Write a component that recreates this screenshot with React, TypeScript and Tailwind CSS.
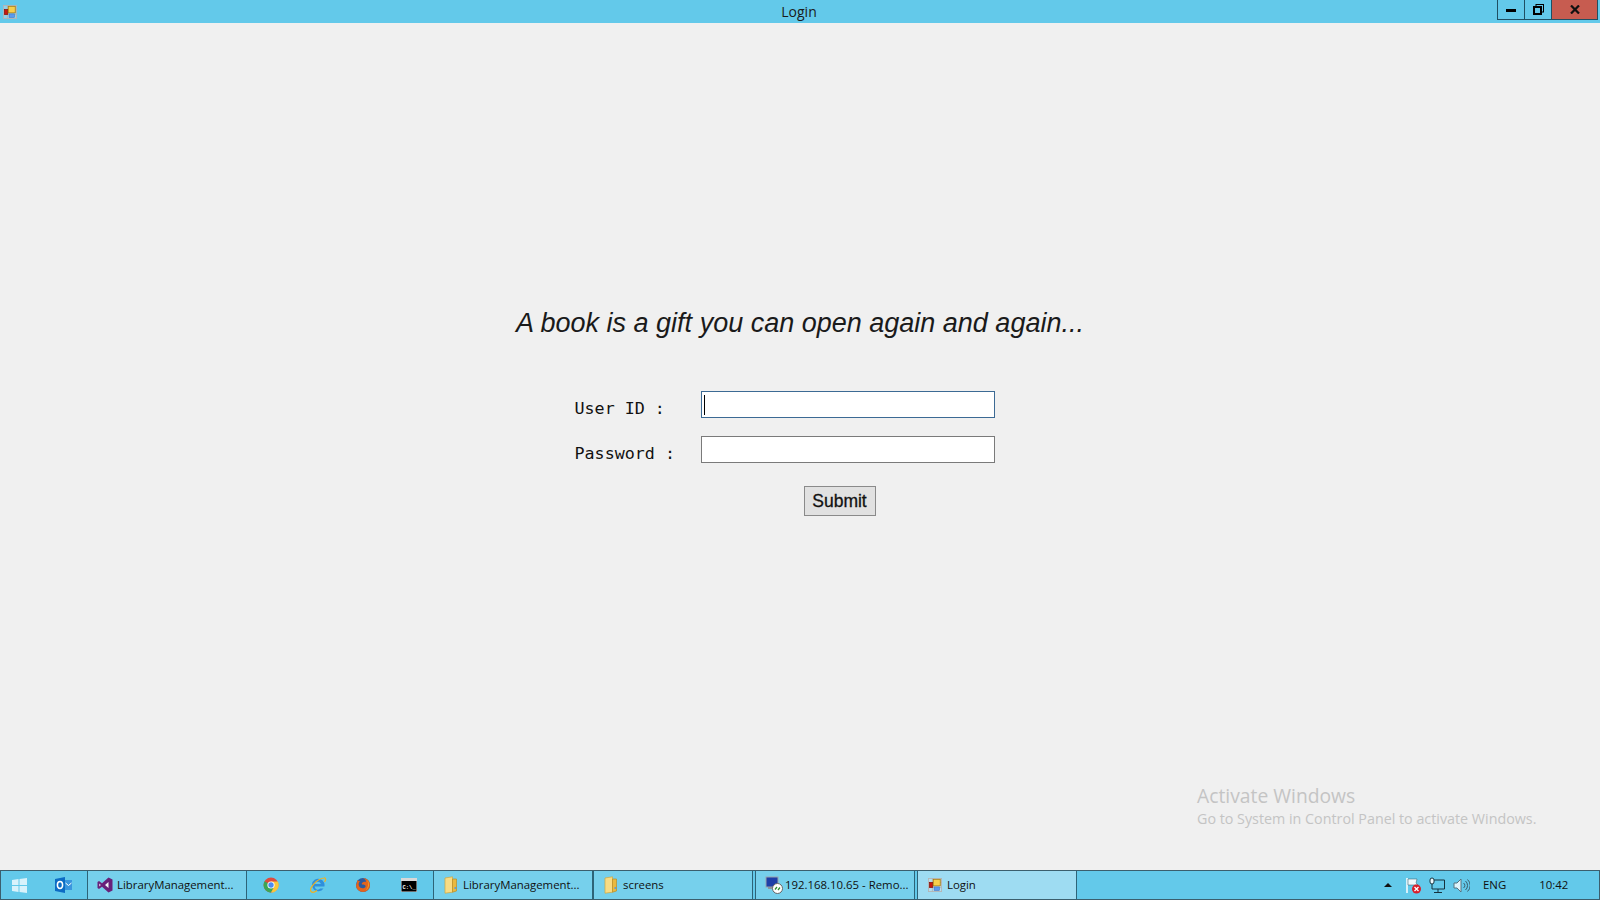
import React from "react";

const Sans = "font-['Open_Sans','Noto_Sans',sans-serif]";

function AppIcon({ size = 16 }: { size?: number }) {
  return (
    <svg width={size} height={size} viewBox="0 0 16 16">
      <rect x="0.5" y="0.5" width="15" height="15" fill="#dfe6ea" fillOpacity="0.35" stroke="#b4b4b4" />
      <line x1="5" y1="0" x2="5" y2="16" stroke="#b4b4b4" />
      <line x1="0" y1="5" x2="16" y2="5" stroke="#b4b4b4" />
      <line x1="0" y1="11" x2="16" y2="11" stroke="#b4b4b4" />
      <rect x="1.5" y="5" width="4" height="6" fill="#c8190e" stroke="#7d0d06" strokeWidth="0.7" />
      <rect x="6" y="1.5" width="8" height="7.5" fill="#f7cf4c" stroke="#a8790a" strokeWidth="0.9" />
      <rect x="7" y="10.2" width="6" height="4" fill="#5b9bef" stroke="#3b6fc0" strokeWidth="0.6" />
    </svg>
  );
}

function Folder() {
  return (
    <svg width="14" height="18" viewBox="0 0 14 18">
      <path d="M1 2 L8.5 0.8 L8.5 16.2 L1 17.2Z" fill="#f8dc85" stroke="#d0a63c" strokeWidth="0.7" />
      <path d="M8.5 3 L12.5 3 L12.5 15 L8.5 16.2Z" fill="#e9b93f" stroke="#b98c25" strokeWidth="0.7" />
      <rect x="10.5" y="11" width="1.6" height="2" fill="#5f9ed6" />
    </svg>
  );
}

function TaskButton({ w, icon, label, active, gap = "gap-[4px]", pl = "pl-[9px]" }: { w: string; icon: React.ReactNode; label: string; active?: boolean; gap?: string; pl?: string }) {
  return (
    <div className={`${w} h-full shrink-0 flex items-center ${gap} ${pl} border-x border-[#2d6478] ${active ? "bg-[#9edcf2]" : "bg-[#76d0ec]"} text-[11.4px] text-[#101010] ${Sans} whitespace-nowrap overflow-hidden`}>
      <span className="shrink-0 flex items-center">{icon}</span>
      <span>{label}</span>
    </div>
  );
}

function Pinned({ w, children }: { w: string; children: React.ReactNode }) {
  return <div className={`${w} h-full flex items-center justify-center shrink-0`}>{children}</div>;
}

export default function App() {
  return (
    <div className="w-[1600px] h-[900px] flex flex-col bg-[#f0f0f0] overflow-hidden relative">
      {/* title bar */}
      <div className="h-[23px] bg-[#63c9ea] flex items-start shrink-0">
        <div className="pl-[3px] pt-[3px] w-[1497px] flex items-center">
          <AppIcon size={14} />
          <span className={`flex-1 text-center text-[14px] leading-[18px] text-[#1a1a1a] pl-[84px] ${Sans}`}>Login</span>
        </div>
        <div className="flex h-[20px] border border-t-0 border-[#1f4f63] shrink-0 w-[101px]">
          <div className="w-[27px] flex items-center justify-center border-r border-[#1f4f63]">
            <div className="w-[10px] h-[3px] bg-black mt-[2px]" />
          </div>
          <div className="w-[26px] flex items-center justify-center">
            <svg width="11" height="11" viewBox="0 0 11 11">
              <rect x="3" y="0.5" width="7.5" height="7.5" fill="none" stroke="#000" />
              <rect x="1" y="3" width="7" height="7" fill="#63c9ea" stroke="#000" strokeWidth="2" />
            </svg>
          </div>
          <div className="flex-1 bg-[#c75c50] flex items-center justify-center border-l border-[#1f4f63]">
            <svg width="10" height="9" viewBox="0 0 10 9">
              <path d="M1 0.5 L9 8.5 M9 0.5 L1 8.5" stroke="#111" strokeWidth="2.2" />
            </svg>
          </div>
        </div>
      </div>

      {/* form */}
      <div className="flex-1 flex flex-col items-center">
        <div className="mt-[284px] text-[27px] leading-[32px] italic text-[#1a1a1a] font-['Liberation_Sans',sans-serif]">
          A book is a gift you can open again and again...
        </div>
        <div className="mt-[52px] w-[420px] ml-[-31px] flex flex-col">
          <div className="flex items-center h-[27px] font-['DejaVu_Sans_Mono',monospace] text-[16.7px] text-[#111]">
            <span className="w-[126px] translate-y-[4px]">User ID :</span>
            <div className="w-[294px] h-[27px] bg-white border border-[#3c6a94] flex items-center pl-[2px]">
              <div className="w-px h-[20px] bg-black" />
            </div>
          </div>
          <div className="flex items-center h-[27px] mt-[18px] font-['DejaVu_Sans_Mono',monospace] text-[16.7px] text-[#111]">
            <span className="w-[126px] translate-y-[4px]">Password :</span>
            <div className="w-[294px] h-[27px] bg-white border border-[#7a7a7a]" />
          </div>
          <div className="flex pl-[229px] mt-[23px]">
            <div className="w-[72px] h-[30px] bg-[#e1e1e1] border border-[#8a8a8a] flex items-center justify-center text-[17.5px] pt-[1px] [-webkit-text-stroke:0.3px_#111] font-['Liberation_Sans',sans-serif] text-[#111]">
              Submit
            </div>
          </div>
        </div>
      </div>

      {/* watermark */}
      <div className={`absolute left-[1197px] top-[782px] text-[#c4c4c4] ${Sans}`}>
        <div className="text-[19.3px] leading-[27px]">Activate Windows</div>
        <div className="text-[14.3px] leading-[20px]">Go to System in Control Panel to activate Windows.</div>
      </div>

      {/* taskbar */}
      <div className="h-[30px] shrink-0 bg-[#63c9ea] border border-[#3b5f6e] flex items-stretch">
        <Pinned w="w-[37px]">
          <svg width="15" height="15" viewBox="0 0 15 15">
            <path d="M0 2 L6.5 1 V7 H0Z M7.5 1 L15 0 V7 H7.5Z M0 8 H6.5 V14 L0 13Z M7.5 8 H15 V15 L7.5 14Z" fill="#d9f2fb" />
          </svg>
        </Pinned>
        <Pinned w="w-[49px]">
          <svg width="17" height="16" viewBox="0 0 17 16" className="translate-x-[1px]">
            <path d="M0 2 L10 0 V16 L0 14Z" fill="#0c6cc4" />
            <rect x="10" y="3" width="7" height="10" fill="#3a96de" />
            <path d="M10.5 6 L13.5 8.5 L16.5 6" stroke="#fff" fill="none" />
            <ellipse cx="5" cy="8" rx="2.6" ry="3.4" fill="none" stroke="#fff" strokeWidth="1.5" />
          </svg>
        </Pinned>
        <TaskButton
          w="w-[160px]"
          icon={
            <svg width="16" height="16" viewBox="0 0 16 16">
              <path d="M11.5 2 L14.5 3.5 V12.5 L11.5 14 L5 9.5 L2.2 11.3 L1 10.5 V5.5 L2.2 4.7 L5 6.5Z" fill="#f3f3f7" />
              <path d="M11.5 0.5 L15.5 2.5 V13.5 L11.5 15.5 L5 9.8 L2 12 L0.5 11 V5 L2 4 L5 6.2Z M11.5 5 L8 8 L11.5 11Z M2.3 6.6 V9.4 L3.8 8Z" fill="#68217a" fillRule="evenodd" />
            </svg>
          }
          label="LibraryManagement..."
        />
        <Pinned w="w-[48px]">
          <svg width="16" height="16" viewBox="0 0 16 16">
            <circle cx="8" cy="8" r="7.5" fill="#dd4b3e" />
            <path d="M8 8 L1.6 4.3 A7.5 7.5 0 0 0 8 15.5 L11.7 9Z" fill="#3aa757" />
            <path d="M8 4.5 H14.9 A7.5 7.5 0 0 1 8 15.5 L11 10Z" fill="#f8c63d" />
            <circle cx="8" cy="8" r="3.6" fill="#fff" />
            <circle cx="8" cy="8" r="2.7" fill="#4a8af4" />
          </svg>
        </Pinned>
        <Pinned w="w-[45px]">
          <svg width="18" height="18" viewBox="0 0 18 18">
            <path d="M15 6.5 A6.3 6.3 0 1 0 14.5 12.5 H11.2 A3.2 3.2 0 0 1 5.6 10.5 H15.4 A6.3 6.3 0 0 0 15 6.5Z M5.8 8 A3.2 3.2 0 0 1 11.9 8Z" fill="#2f8fdc" fillRule="evenodd" />
            <path d="M2 15.5 C0 13 7 3 15 2 C17.2 1.5 17 4 15.5 6 M2 15.5 C3.5 17 6 16 8 14.5" fill="none" stroke="#f2b21f" strokeWidth="1.2" />
          </svg>
        </Pinned>
        <Pinned w="w-[45px]">
          <svg width="16" height="16" viewBox="0 0 16 16">
            <circle cx="8" cy="8" r="7" fill="#2c5a9e" />
            <path d="M2 3 C2.5 5 2 6 1 8 A7 7 0 0 0 15 8 C15 4 12 1 8 1 C10 2 11 3 11 5 C9 4 6 6 7 7.5 C9 7.5 11 8 10.5 10 C9 12 5 11.5 4 9 C3 7 4 5 5 4 C3.5 4 2.8 3.5 2 3Z" fill="#e4641c" />
            <path d="M12 3 C15 6 14.5 11 11 13 C14 9 13.5 6 12 3Z" fill="#f4a524" />
          </svg>
        </Pinned>
        <Pinned w="w-[48px]">
          <svg width="16" height="14" viewBox="0 0 16 14">
            <rect width="16" height="14" fill="#d8d8d8" />
            <rect x="0.5" y="3" width="15" height="10.5" fill="#000" />
            <text x="1.5" y="10.5" fontSize="5.5" fontWeight="700" fill="#fff" fontFamily="Liberation Mono, monospace">C:\_</text>
          </svg>
        </Pinned>
        <TaskButton w="w-[160px]" pl="pl-[10px]" gap="gap-[5px]" icon={<Folder />} label="LibraryManagement..." />
        <TaskButton w="w-[160px]" pl="pl-[10px]" gap="gap-[5px]" icon={<Folder />} label="screens" />
        <div className="w-[2px] shrink-0" />
        <TaskButton
          w="w-[160px]"
          pl="pl-[9px]"
          gap="gap-[2px]"
          icon={
            <svg width="18" height="18" viewBox="0 0 18 18">
              <rect x="1" y="1" width="12" height="10" fill="#1d3fa8" stroke="#9aa3ad" />
              <rect x="3" y="11" width="9" height="2" fill="#8b949e" />
              <circle cx="12.5" cy="12.5" r="5" fill="#fff" stroke="#666" />
              <path d="M10 13.5 L12 11 M13 14 L15 11.5" stroke="#2f8f2f" strokeWidth="1.3" />
            </svg>
          }
          label="192.168.10.65 - Remo..."
        />
        <div className="w-[2px] shrink-0" />
        <TaskButton w="w-[160px]" pl="pl-[10px]" gap="gap-[5px]" active icon={<AppIcon size={14} />} label="Login" />
        <div className="flex-1 flex items-center">
          <div className="w-[307px] shrink-0" />
          <div className="w-0 h-0 border-x-[4px] border-x-transparent border-b-[4px] border-b-[#111]" />
          <div className="ml-[13px]">
            <svg width="17" height="17" viewBox="0 0 17 17">
              <path d="M2 1 V16" stroke="#f4fbfe" strokeWidth="1.6" />
              <path d="M3 2 H12 L11 6 L13 8 H3Z" fill="#eef9fd" stroke="#33515e" strokeWidth="0.5" />
              <circle cx="11.5" cy="12" r="4.5" fill="#d81e2a" />
              <path d="M9.5 10 L13.5 14 M13.5 10 L9.5 14" stroke="#fff" strokeWidth="1.3" />
            </svg>
          </div>
          <div className="ml-[7px]">
            <svg width="17" height="17" viewBox="0 0 17 17" fill="none" stroke="#16323e" strokeWidth="1">
              <rect x="1" y="1" width="4" height="6" rx="2" fill="#eef9fd" />
              <path d="M5 3 H15.5 V12 H3 V7" />
              <path d="M9 12 V15 M5 15.5 H13" />
            </svg>
          </div>
          <div className="ml-[7px]">
            <svg width="17" height="17" viewBox="0 0 17 17" fill="none">
              <path d="M1 6 H4 L8 2 V15 L4 11 H1Z" fill="#dff4fb" stroke="#56727e" />
              <path d="M10.5 6 A3 3 0 0 1 10.5 11 M12.5 4 A6 6 0 0 1 12.5 13 M14.5 2.5 A8 8 0 0 1 14.5 14.5" stroke="#3c5c6a" />
            </svg>
          </div>
          <span className={`ml-[13px] text-[11.4px] text-[#101010] ${Sans}`}>ENG</span>
          <span className={`ml-[33px] text-[11.4px] text-[#101010] ${Sans}`}>10:42</span>
        </div>
      </div>
    </div>
  );
}
